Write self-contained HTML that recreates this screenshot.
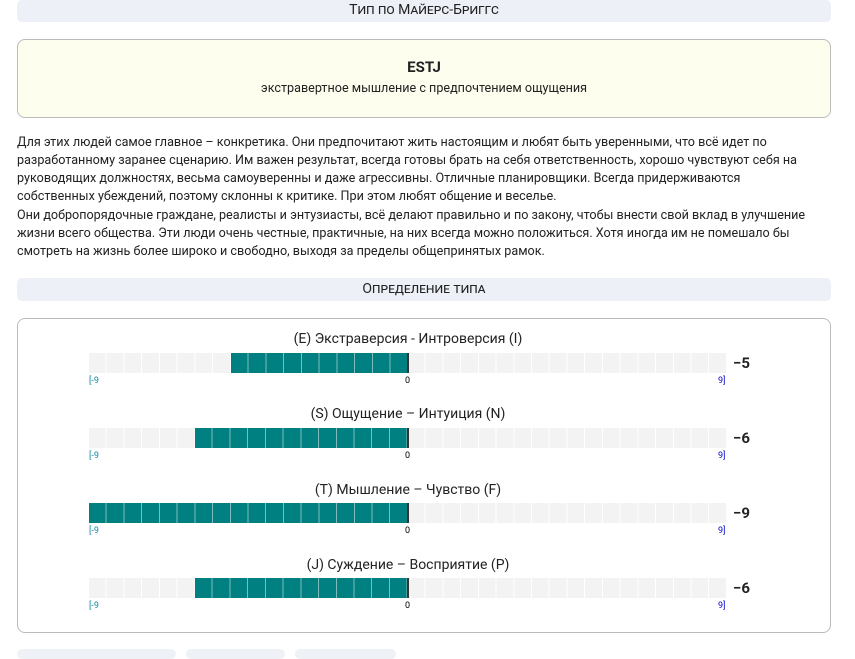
<!DOCTYPE html>
<html><head><meta charset="utf-8"><style>
body{margin:0;width:855px;height:653px;overflow:hidden;background:#fff;font-family:"Roboto","Liberation Sans","DejaVu Sans",sans-serif;color:#222;position:relative}
.hd{position:absolute;left:17px;width:814px;height:22px;background:#eef0f8;border-radius:5px;text-align:center;font-size:14px;line-height:22px;font-variant:small-caps;color:#222}
.box{position:absolute;left:17px;width:812px;border:1px solid #bbb;border-radius:8px}
p{margin:0;font-size:12.6px;line-height:18px;position:absolute;left:17px;width:800px}
.t{position:absolute;left:0;width:782px;text-align:center;font-size:14px}
.bar{position:absolute;left:89px;width:638px;height:20px;background:repeating-linear-gradient(90deg,#f3f3f3 0 16.72px,#fff 16.72px 17.72px)}
.f{position:absolute;top:0;height:20px;background:repeating-linear-gradient(90deg,#008080 0 16.72px,#7fbcbc 16.72px 17.72px)}
.z{position:absolute;left:318px;top:0;width:2px;height:20px;background:#333}
.v{position:absolute;left:733px;font-size:15px;font-weight:bold;color:#222}
.l{position:absolute;font-size:9px;color:#000}
</style></head><body>
<div class="hd" style="top:0;line-height:21px">Тип по Майерс-Бриггс</div>
<div class="box" style="top:39px;height:77px;background:#fefeef">
<div style="text-align:center;font-weight:bold;font-size:15px;margin-top:18px">ESTJ</div>
<div style="text-align:center;font-size:12.6px;margin-top:5px">экстравертное мышление с предпочтением ощущения</div>
</div>
<p style="top:134px">Для этих людей самое главное – конкретика. Они предпочитают жить настоящим и любят быть уверенными, что всё идет по разработанному заранее сценарию. Им важен результат, всегда готовы брать на себя ответственность, хорошо чувствуют себя на руководящих должностях, весьма самоуверенны и даже агрессивны. Отличные планировщики. Всегда придерживаются собственных убеждений, поэтому склонны к критике. При этом любят общение и веселье.</p>
<p style="top:207px">Они добропорядочные граждане, реалисты и энтузиасты, всё делают правильно и по закону, чтобы внести свой вклад в улучшение жизни всего общества. Эти люди очень честные, практичные, на них всегда можно положиться. Хотя иногда им не помешало бы смотреть на жизнь более широко и свободно, выходя за пределы общепринятых рамок.</p>
<div class="hd" style="top:278px;height:23px;line-height:23px">Определение типа</div>
<div class="box" style="top:318px;height:313px"></div>

<div style="position:absolute;left:17px;top:331px;width:814px;height:300px">
<div class="t" style="top:0">(E) Экстраверсия - Интроверсия (I)</div>
<div class="t" style="top:75px">(S) Ощущение – Интуиция (N)</div>
<div class="t" style="top:151px">(T) Мышление – Чувство (F)</div>
<div class="t" style="top:226px">(J) Суждение – Восприятие (P)</div>
</div>

<div class="bar" style="top:353px"><div class="f" style="left:141.8px;width:177.2px"></div><div class="z"></div></div>
<div class="bar" style="top:428px"><div class="f" style="left:106.3px;width:212.7px"></div><div class="z"></div></div>
<div class="bar" style="top:503px"><div class="f" style="left:0;width:319px"></div><div class="z"></div></div>
<div class="bar" style="top:578px"><div class="f" style="left:106.3px;width:212.7px"></div><div class="z"></div></div>

<div class="v" style="top:354px">−5</div>
<div class="v" style="top:429px">−6</div>
<div class="v" style="top:504px">−9</div>
<div class="v" style="top:579px">−6</div>

<div class="l" style="left:89px;top:376px;color:#0a8aa0">[-9</div><div class="l" style="left:405px;top:376px">0</div><div class="l" style="left:718px;top:376px;color:#00c">9]</div>
<div class="l" style="left:89px;top:451px;color:#0a8aa0">[-9</div><div class="l" style="left:405px;top:451px">0</div><div class="l" style="left:718px;top:451px;color:#00c">9]</div>
<div class="l" style="left:89px;top:526px;color:#0a8aa0">[-9</div><div class="l" style="left:405px;top:526px">0</div><div class="l" style="left:718px;top:526px;color:#00c">9]</div>
<div class="l" style="left:89px;top:601px;color:#0a8aa0">[-9</div><div class="l" style="left:405px;top:601px">0</div><div class="l" style="left:718px;top:601px;color:#00c">9]</div>

<div style="position:absolute;left:17px;top:649px;width:159px;height:10px;background:#eef2f7;border-radius:6px"></div>
<div style="position:absolute;left:186px;top:649px;width:99px;height:10px;background:#eef2f7;border-radius:6px"></div>
<div style="position:absolute;left:295px;top:649px;width:101px;height:10px;background:#eef2f7;border-radius:6px"></div>
</body></html>
